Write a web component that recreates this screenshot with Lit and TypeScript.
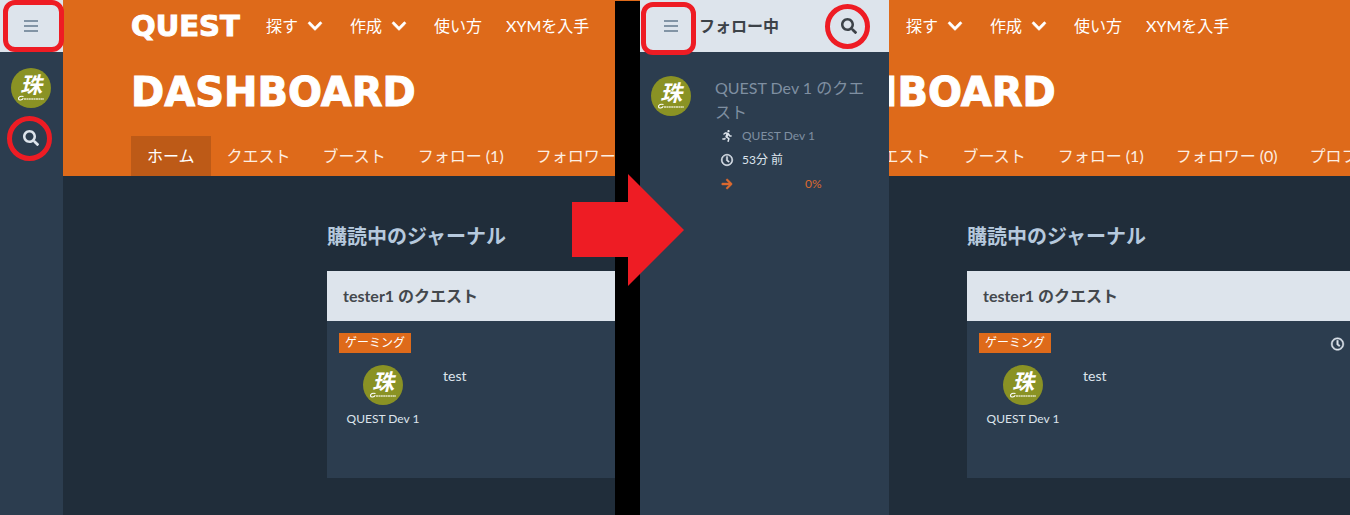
import { LitElement, html, css, svg } from "lit";
import { customElement } from "lit/decorators.js";

const ICONS: Record<string, { box: string; d: string }> = {
  search: {
    box: "0 0 512 512",
    d: "M505 442.7L405.3 343c-4.5-4.5-10.6-7-17-7H372c27.6-35.3 44-79.7 44-128C416 93.1 322.9 0 208 0S0 93.1 0 208s93.1 208 208 208c48.3 0 92.7-16.4 128-44v16.3c0 6.4 2.5 12.5 7 17l99.7 99.7c9.4 9.4 24.6 9.4 33.9 0l28.3-28.3c9.4-9.4 9.4-24.6.1-34zM208 336c-70.7 0-128-57.2-128-128 0-70.7 57.2-128 128-128 70.7 0 128 57.2 128 128 0 70.7-57.2 128-128 128z",
  },
  bars: {
    box: "0 0 14 14",
    d: "M0 1h14v2H0zM0 6h14v2H0zM0 11h14v2H0z",
  },
  chevron: {
    box: "0 0 448 512",
    d: "M207.029 381.476L12.686 187.132c-9.373-9.373-9.373-24.569 0-33.941l22.667-22.667c9.357-9.357 24.522-9.375 33.901-.04L224 284.505l154.745-154.021c9.379-9.335 24.544-9.317 33.901.04l22.667 22.667c9.373 9.373 9.373 24.569 0 33.941L240.971 381.476c-9.373 9.372-24.569 9.372-33.942 0z",
  },
  arrow: {
    box: "0 0 448 512",
    d: "M190.5 66.9l22.2-22.2c9.4-9.4 24.6-9.4 33.9 0L441 239c9.4 9.4 9.4 24.6 0 33.9L246.6 467.3c-9.4 9.4-24.6 9.4-33.9 0l-22.2-22.2c-9.5-9.5-9.3-25 .4-34.3L311.4 296H24c-13.3 0-24-10.7-24-24v-32c0-13.3 10.7-24 24-24h287.4L190.9 101.2c-9.8-9.3-10-24.8-.4-34.3z",
  },
  clock: {
    box: "0 0 512 512",
    d: "M256 8C119 8 8 119 8 256s111 248 248 248 248-111 248-248S393 8 256 8zm0 448c-110.5 0-200-89.5-200-200S145.5 56 256 56s200 89.5 200 200-89.5 200-200 200zm61.8-104.4l-84.9-61.7c-3.1-2.3-4.9-5.9-4.9-9.7V116c0-6.6 5.4-12 12-12h32c6.6 0 12 5.4 12 12v141.7l66.8 48.6c5.4 3.9 6.5 11.4 2.6 16.8L334.6 349c-3.9 5.3-11.4 6.5-16.8 2.6z",
  },
  running: {
    box: "0 0 416 512",
    d: "M272 96c26.51 0 48-21.49 48-48S298.51 0 272 0s-48 21.49-48 48 21.49 48 48 48zM113.69 317.47l-14.8 34.52H32c-17.67 0-32 14.33-32 32s14.33 32 32 32h77.45c19.25 0 36.58-11.44 44.11-29.09l8.79-20.52-10.67-6.3c-17.32-10.23-30.06-25.37-37.99-42.61zM384 223.99h-44.03l-26.06-53.25c-12.5-25.55-35.45-44.23-61.78-50.94l-71.08-21.14c-28.3-6.8-57.77-.55-80.84 17.14l-39.67 30.41c-14.03 10.75-16.69 30.83-5.92 44.86s30.84 16.66 44.86 5.92l39.69-30.41c7.67-5.89 17.44-8 25.27-6.14l14.7 4.37-37.46 87.39c-12.62 29.48-1.31 64.01 26.3 80.31l84.98 50.17-27.47 87.73c-5.28 16.86 4.11 34.82 20.97 40.09 3.19 1 6.41 1.48 9.58 1.48 13.61 0 26.23-8.77 30.52-22.45l31.64-101.06c5.91-20.77-2.89-43.08-21.64-54.39l-61.24-36.14 31.31-78.28 20.27 41.43c8 16.34 24.92 26.89 43.11 26.89H384c17.67 0 32-14.33 32-32s-14.33-31.99-32-31.99z",
  },
};

const icon = (name: string, size = "") => html`<svg
  class="icon ${size}"
  viewBox=${ICONS[name].box}
  aria-hidden="true"
>
  ${svg`<path d=${ICONS[name].d}></path>`}
</svg>`;

const avatar = () => html`<svg class="avatar" viewBox="0 0 40 40" role="img" aria-label="QUEST Dev 1">
  <circle cx="20" cy="20" r="20" fill="#8a9224"></circle>
  <text class="seal" x="20" y="25" text-anchor="middle">珠</text>
  <path
    d="M12.500 28.600c-2.300-1-5.300.2-5 2.200.3 1.700 3.600 1.600 4.800-.6"
    fill="none"
    stroke="#fff"
    stroke-width="1.100"
  ></path>
  <path d="M13 31h20" stroke="#e3e5c4" stroke-width="1.500" stroke-dasharray="2 .4"></path>
</svg>`;

const shared = css`
  :host,
  *,
  *::before {
    box-sizing: border-box;
  }
  a {
    color: inherit;
    text-decoration: none;
  }
  button {
    display: inline-flex;
    align-items: center;
    justify-content: center;
    padding: 0;
    border: 0;
    background: none;
    color: inherit;
    font: inherit;
    cursor: pointer;
  }
  h1,
  h2,
  h3,
  p {
    margin: 0;
  }
  .icon {
    display: block;
    flex: none;
    width: 14px;
    height: 14px;
    fill: currentColor;
  }
  .icon.large {
    width: 16px;
    height: 16px;
  }
  .icon.chev {
    width: 14px;
    height: 16px;
  }
  .icon.small {
    width: 12px;
    height: 12px;
  }
  .icon.bold {
    stroke: currentColor;
    stroke-width: 20px;
    overflow: visible;
  }
  .avatar {
    display: block;
    flex: none;
    width: 40px;
    height: 40px;
  }
  .seal {
    font: italic bold 22px "Noto Sans CJK JP", sans-serif;
    fill: #fff;
  }
`;

@customElement("quest-rail")
export class QuestRail extends LitElement {
  static styles = [
    shared,
    css`
      :host {
        display: flex;
        flex-direction: column;
        flex: none;
        width: 63px;
        background: #2c3d4f;
        color: #dde4ec;
      }
      .top {
        display: flex;
        justify-content: center;
        height: 52px;
        padding-right: 1px;
        background: #dde4ec;
        color: #8294a5;
      }
      .tools {
        display: flex;
        flex-direction: column;
        align-items: center;
        gap: 22px;
        padding: 16px 1px 0 0;
      }
    `,
  ];
  render() {
    return html`<div class="top"><button aria-label="メニュー">${icon("bars")}</button></div>
      <div class="tools">
        <a href="#">${avatar()}</a>
        <button aria-label="検索">${icon("search", "large")}</button>
      </div>`;
  }
}

@customElement("quest-drawer")
export class QuestDrawer extends LitElement {
  static styles = [
    shared,
    css`
      :host {
        display: block;
        background: #2c3d4f;
        color: #dde4ec;
      }
      .top {
        display: flex;
        align-items: center;
        height: 52px;
        padding-right: 32px;
        background: #dde4ec;
        color: #3c4248;
      }
      .menu {
        width: 59px;
        height: 52px;
        padding-left: 3px;
        color: #8294a5;
      }
      .top h2 {
        flex: 1;
        font-size: 16px;
        line-height: 24px;
      }
      .entry {
        display: flex;
        gap: 24px;
        padding: 24px 16px 0 11px;
      }
      .name {
        font-size: 16px;
        font-weight: 400;
        line-height: 24px;
        color: #7f8fa1;
      }
      .row {
        display: grid;
        grid-template-columns: 12px 54px 1fr;
        align-items: center;
        column-gap: 9px;
        padding-left: 6px;
        font-size: 12px;
        line-height: 24px;
        white-space: nowrap;
      }
      .muted {
        color: #7f8fa1;
      }
      .wide {
        grid-column: 2 / 4;
      }
      .rate {
        color: #dc6a30;
      }
      .rate span {
        grid-column: 3;
      }
    `,
  ];
  render() {
    return html`<div class="top">
        <button class="menu" aria-label="メニュー">${icon("bars")}</button>
        <h2>フォロー中</h2>
        <button aria-label="検索">${icon("search", "large")}</button>
      </div>
      <div class="entry">
        ${avatar()}
        <div>
          <h3 class="name">QUEST Dev 1 のクエスト</h3>
          <div class="row">${icon("running", "small")}<span class="wide muted">QUEST Dev 1</span></div>
          <div class="row">${icon("clock", "small bold")}<span class="wide">53分 前</span></div>
          <div class="row rate">${icon("arrow", "small bold")}<span>0%</span></div>
        </div>
      </div>`;
  }
}

@customElement("quest-main")
export class QuestMain extends LitElement {
  static styles = [
    shared,
    css`
      :host {
        display: block;
        flex: 1;
        min-width: 0;
        overflow: hidden;
        background: #202d3a;
        color: #dde4ec;
        white-space: nowrap;
      }
      header {
        padding-left: 68px;
        background: #de6a1a;
        color: #fff;
      }
      nav {
        display: flex;
        align-items: center;
      }
      .bar {
        gap: 24px;
        height: 52px;
        font-size: 16px;
        line-height: 22px;
      }
      .logo,
      h1 {
        -webkit-text-stroke: 1px currentColor;
      }
      .logo {
        width: 111px;
        font: bold 29px "DejaVu Sans", sans-serif;
      }
      .drop {
        gap: 10px;
        padding-right: 4px;
      }
      h1 {
        height: 84px;
        font: bold 40px/80px "DejaVu Sans", sans-serif;
      }
      .tab {
        padding: 0 16px;
        font-size: 16px;
        line-height: 40px;
        color: #fdeee2;
      }
      .tab.on {
        background: #bd5a17;
        color: #fff;
      }
      section {
        padding: 45px 0 37px 264px;
      }
      h2 {
        font-size: 20px;
        line-height: 30px;
        color: #b6c9dd;
      }
      .card {
        min-width: 400px;
        min-height: 207px;
        margin-top: 20px;
        background: #2c3d4f;
      }
      .card h3 {
        padding: 0 16px;
        font-size: 16px;
        line-height: 50px;
        background: #dde4ec;
        color: #43484d;
      }
      .meta {
        display: grid;
        grid-template-columns: 352px 1fr;
        align-items: end;
        padding: 12px 12px 0;
      }
      .meta .icon {
        width: 13px;
        height: 18px;
      }
      .tag {
        justify-self: start;
        padding: 0 6px;
        font-size: 12px;
        line-height: 20px;
        background: #de6a1a;
        color: #fff;
      }
      .post {
        display: flex;
        gap: 16px;
        padding: 12px 12px 0;
      }
      .author {
        display: flex;
        flex-direction: column;
        align-items: center;
        width: 88px;
        gap: 4px;
        font-size: 12px;
        line-height: 20px;
      }
      .text {
        font-size: 14px;
        line-height: 22px;
      }
    `,
  ];
  render() {
    const tabs = ["ホーム", "クエスト", "ブースト", "フォロー (1)", "フォロワー (0)", "プロフィール"];
    return html`<header>
        <nav class="bar">
          <a class="logo" href="#">QUEST</a>
          <button class="drop">探す ${icon("chevron", "chev bold")}</button>
          <button class="drop">作成 ${icon("chevron", "chev bold")}</button>
          <a href="#">使い方</a>
          <a href="#">XYMを入手</a>
        </nav>
        <h1>DASHBOARD</h1>
        <nav>${tabs.map((t, i) => html`<a class="tab ${i === 0 ? "on" : ""}" href="#">${t}</a>`)}</nav>
      </header>
      <section>
        <h2>購読中のジャーナル</h2>
        <article class="card">
          <h3>tester1 のクエスト</h3>
          <div class="meta"><span class="tag">ゲーミング</span>${icon("clock", "bold")}</div>
          <div class="post">
            <div class="author">${avatar()}<span>QUEST Dev 1</span></div>
            <p class="text">test</p>
          </div>
        </article>
      </section>`;
  }
}

@customElement("app-root")
export class AppRoot extends LitElement {
  static styles = [
    shared,
    css`
      :host {
        display: flex;
        position: relative;
        min-height: 100vh;
        overflow: hidden;
        background: #000;
        font-family: Lato, "Noto Sans CJK JP", sans-serif;
      }
      .pane {
        display: flex;
        position: relative;
        min-width: 0;
        overflow: hidden;
      }
      .before {
        flex: 615 1 0;
      }
      .after {
        flex: 710 1 0;
      }
      .after quest-main {
        margin-left: 63px;
      }
      .gap {
        flex: none;
        width: 25px;
        border-top: 1px solid #de6a1a;
      }
      .drawer {
        position: absolute;
        inset: 0 auto 0 0;
        width: 249px;
      }
      .mark {
        position: absolute;
        border: 5px solid #ee1c24;
        pointer-events: none;
      }
      .box {
        width: 61px;
        height: 52px;
        top: 0;
        left: 3px;
        border-radius: 12px;
      }
      .after .box {
        width: 55px;
        height: 53px;
        top: 2px;
        left: 1px;
      }
      .ring {
        width: 45px;
        height: 45px;
        border-radius: 50%;
        top: 116px;
        left: 7px;
      }
      .after .ring {
        top: 4px;
        left: 185px;
      }
      .pointer {
        position: absolute;
        top: 174px;
        left: calc((100% - 25px) * 615 / 1325 - 43px);
        width: 112px;
        height: 112px;
        fill: #ee1c24;
      }
    `,
  ];
  render() {
    return html`<div class="pane before">
        <quest-rail></quest-rail>
        <quest-main></quest-main>
        <i class="mark box"></i><i class="mark ring"></i>
      </div>
      <div class="gap"></div>
      <div class="pane after">
        <quest-main></quest-main>
        <quest-drawer class="drawer"></quest-drawer>
        <i class="mark box"></i><i class="mark ring"></i>
      </div>
      <svg class="pointer" viewBox="0 0 112 112" aria-hidden="true">
        <path d="M0 28h56V0l56 56-56 56V83H0z"></path>
      </svg>`;
  }
}
